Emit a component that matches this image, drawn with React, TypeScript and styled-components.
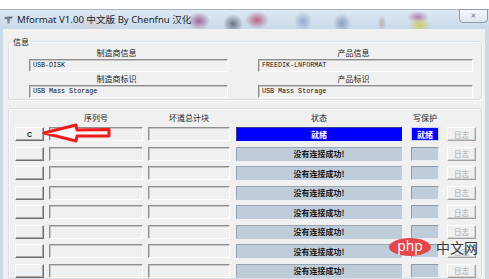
import styled, { createGlobalStyle } from "styled-components";

const GlobalStyle = createGlobalStyle`
  html, body {
    margin: 0;
    padding: 0;
    background: #fff;
  }
  body {
    font-family: "Noto Sans CJK SC", "Noto Sans", sans-serif;
  }
  * {
    box-sizing: border-box;
  }
`;

// column layout for the device table: width + gap before it
const columns = [
  { w: 29, ml: 0 },
  { w: 94, ml: 5 },
  { w: 82, ml: 5 },
  { w: 166, ml: 6 },
  { w: 28, ml: 9 },
  { w: 29, ml: 8 },
];

const headers = ["", "序列号", "坏道总计块", "状态", "写保护", ""];

const devices = [
  { drive: "C", ready: true },
  { drive: "", ready: false },
  { drive: "", ready: false },
  { drive: "", ready: false },
  { drive: "", ready: false },
  { drive: "", ready: false },
  { drive: "", ready: false },
  { drive: "", ready: false },
];

const Screen = styled.div`
  position: relative;
  width: 489px;
  height: 279px;
  overflow: hidden;
  padding-top: 9px;
  background: #fff;
`;

const Window = styled.div`
  height: 100%;
  display: flex;
  flex-direction: column;
  border-top: 1px solid #a7b3c0;
`;

const TitleBar = styled.div`
  height: 19px;
  display: flex;
  align-items: flex-start;
  background:
    radial-gradient(ellipse 11px 9px at 199px 11px, rgba(140, 50, 120, 0.7), transparent),
    radial-gradient(ellipse 10px 10px at 233px 14px, rgba(60, 60, 80, 0.65), transparent),
    radial-gradient(ellipse 12px 9px at 257px 10px, rgba(170, 50, 90, 0.7), transparent),
    radial-gradient(ellipse 9px 10px at 303px 11px, rgba(80, 100, 170, 0.45), transparent),
    radial-gradient(ellipse 9px 10px at 342px 13px, rgba(70, 100, 150, 0.5), transparent),
    radial-gradient(ellipse 4px 9px at 382px 13px, rgba(150, 110, 80, 0.4), transparent),
    radial-gradient(ellipse 11px 8px at 420px 15px, rgba(205, 195, 40, 0.7), transparent),
    radial-gradient(ellipse 11px 6px at 418px 7px, rgba(150, 60, 140, 0.6), transparent),
    radial-gradient(ellipse 24px 9px at 95px 13px, rgba(230, 180, 150, 0.3), transparent),
    linear-gradient(#dde8f3, #c9d9ea);
`;

const AppIcon = styled.svg`
  width: 9px;
  height: 9px;
  margin: 5px 4px 0 4px;
  flex: none;
`;

const Title = styled.div`
  font-family: "Noto Sans", "Noto Sans CJK SC", sans-serif;
  font-size: 9.6px;
  line-height: 19px;
  color: #1c2430;
  white-space: nowrap;
`;

const CloseButton = styled.div`
  margin-left: auto;
  margin-right: 1px;
  width: 29px;
  height: 14px;
  margin-top: -1px;
  border: 1px solid #8c9aab;
  border-radius: 0 0 4px 4px;
  background: linear-gradient(#f4f7fa, #dfe7ef);
  display: flex;
  align-items: center;
  justify-content: center;
  font-size: 7px;
  color: #6a7480;
  font-family: "DejaVu Sans", sans-serif;
`;

const Body = styled.div`
  flex: 1;
  background: #f0f0f0;
  border-left: 3px solid #cbd9e8;
  border-right: 4px solid #cbd9e8;
  padding: 8px 3px 0 5px;
`;

const GroupBox = styled.fieldset<{ $top?: number }>`
  margin: ${(p) => p.$top ?? 0}px 0 0 0;
  padding: 0;
  min-width: 0;
  border: 1px solid #d5dfe5;
  border-radius: 3px;
  box-shadow: inset 1px 1px 0 #fff, 1px 1px 0 #fff;
`;

const Legend = styled.legend`
  margin-left: 3px;
  padding: 0 1px;
  font-size: 8px;
  line-height: 9px;
  color: #1a1a1a;
`;

const InfoGrid = styled.div`
  display: grid;
  grid-template-columns: 199px 215px;
  grid-template-rows: 11px 13px 11px 13px;
  column-gap: 30px;
  row-gap: 1px;
  padding: 1px 8px 1px 20px;
`;

const InfoLabel = styled.div`
  font-size: 8px;
  line-height: 11px;
  text-align: center;
  padding-right: 24px;
  color: #1a1a1a;
`;

const InfoField = styled.div`
  border: 1px solid;
  border-color: #8f8f8f #fff #fff #8f8f8f;
  box-shadow: inset 1px 1px 0 #c6c6c6;
  background: #f0f0f0;
  font-family: "Liberation Mono", monospace;
  font-size: 6.7px;
  line-height: 11px;
  padding-left: 3px;
  color: #111;
  white-space: nowrap;
`;

const Table = styled.div`
  display: flex;
  flex-direction: column;
  gap: 5.5px;
  padding: 4px 0 0 6px;
`;

const Row = styled.div`
  position: relative;
  display: flex;
  height: 14px;
`;

const HeaderRow = styled.div`
  display: flex;
  height: 10px;
  margin-bottom: -1.5px;
`;

const Cell = styled.div<{ $w: number; $ml: number }>`
  width: ${(p) => p.$w}px;
  margin-left: ${(p) => p.$ml}px;
  flex: none;
  height: 100%;
`;

const HeaderText = styled.div`
  font-size: 8px;
  line-height: 10px;
  text-align: center;
  color: #1a1a1a;
  white-space: nowrap;
`;

const DriveButton = styled.div<{ $disabled?: boolean }>`
  height: 100%;
  border: 1px solid;
  border-color: #fff #6e6e6e #6e6e6e #fff;
  box-shadow: inset -1px -1px 0 #a9a9a9;
  background: #f0f0f0;
  display: flex;
  align-items: center;
  justify-content: center;
  font-family: "Liberation Sans", sans-serif;
  font-size: 7px;
  font-weight: 700;
  color: ${(p) => (p.$disabled ? "#a8a8a8" : "#222")};
`;

const LogButton = styled(DriveButton)`
  border-color: #fff #a0a0a0 #a0a0a0 #fff;
  box-shadow: inset -1px -1px 0 #d2d2d2;
  font-family: "Noto Sans CJK SC", sans-serif;
  font-size: 7.5px;
  font-weight: 400;
`;

const SunkenField = styled.div`
  height: 100%;
  border: 1px solid;
  border-color: #8f8f8f #fff #fff #8f8f8f;
  box-shadow: inset 1px 1px 0 #c6c6c6;
  background: #f0f0f0;
`;

const StatusField = styled.div<{ $ready: boolean; $boxed?: boolean }>`
  height: 100%;
  border: 1px solid;
  border-color: ${(p) =>
    p.$ready
      ? p.$boxed
        ? "#c8d0e8"
        : "#3a3a8a #0000ff #0000ff #3a3a8a"
      : p.$boxed
      ? "#909aa4 #e8eef4 #e8eef4 #909aa4"
      : "#98a4b0 #bfcddb #bfcddb #98a4b0"};
  background: ${(p) => (p.$ready ? "#0000ff" : "#bfcddb")};
  display: flex;
  align-items: center;
  justify-content: center;
  font-size: 8px;
  font-weight: 700;
  color: ${(p) => (p.$ready ? "#fff" : "#161616")};
  white-space: nowrap;
`;

const Arrow = styled.svg`
  position: absolute;
  left: 25px;
  top: -5px;
  width: 74px;
  height: 23px;
  pointer-events: none;
`;

const Watermark = styled.div`
  position: absolute;
  left: 389px;
  top: 238px;
  display: flex;
  align-items: center;
  gap: 5px;
`;

const PhpBadge = styled.div`
  width: 42px;
  height: 18px;
  border-radius: 50%;
  background: #e2474c;
  color: #fff;
  display: flex;
  align-items: center;
  justify-content: center;
  font-family: "Open Sans", "Liberation Sans", sans-serif;
  font-size: 14px;
  line-height: 18px;
  padding-bottom: 2px;
`;

const SiteName = styled.div`
  font-size: 14px;
  line-height: 18px;
  color: #3a3a3a;
`;

export default function App() {
  return (
    <Screen>
      <GlobalStyle />
      <Window>
        <TitleBar>
          <AppIcon viewBox="0 0 9 9">
            <path d="M0.5 2 L8.5 1 L8 3.5 L1 4 Z" fill="#5a6470" />
            <path d="M3 4 L6 4 L5.5 8.5 L3.5 8.5 Z" fill="#7d8a96" />
            <path d="M1 2.2 L8 1.4" stroke="#c8d2dc" strokeWidth="0.6" />
          </AppIcon>
          <Title>Mformat V1.00 中文版 By Chenfnu 汉化</Title>
          <CloseButton>✕</CloseButton>
        </TitleBar>
        <Body>
          <GroupBox>
            <Legend>信息</Legend>
            <InfoGrid>
              <InfoLabel>制造商信息</InfoLabel>
              <InfoLabel>产品信息</InfoLabel>
              <InfoField>USB-DISK</InfoField>
              <InfoField>FREEDIK-LNFORMAT</InfoField>
              <InfoLabel>制造商标识</InfoLabel>
              <InfoLabel>产品标识</InfoLabel>
              <InfoField>USB Mass Storage</InfoField>
              <InfoField>USB Mass Storage</InfoField>
            </InfoGrid>
          </GroupBox>
          <GroupBox $top={8}>
            <Table>
              <HeaderRow>
                {columns.map((c, i) => (
                  <Cell key={i} $w={c.w} $ml={c.ml}>
                    <HeaderText>{headers[i]}</HeaderText>
                  </Cell>
                ))}
              </HeaderRow>
              {devices.map((d, i) => (
                <Row key={i}>
                  <Cell $w={columns[0].w} $ml={columns[0].ml}>
                    <DriveButton>{d.drive}</DriveButton>
                  </Cell>
                  <Cell $w={columns[1].w} $ml={columns[1].ml}>
                    <SunkenField />
                  </Cell>
                  <Cell $w={columns[2].w} $ml={columns[2].ml}>
                    <SunkenField />
                  </Cell>
                  <Cell $w={columns[3].w} $ml={columns[3].ml}>
                    <StatusField $ready={d.ready}>
                      {d.ready ? "就绪" : "没有连接成功!"}
                    </StatusField>
                  </Cell>
                  <Cell $w={columns[4].w} $ml={columns[4].ml}>
                    <StatusField $ready={d.ready} $boxed>
                      {d.ready ? "就绪" : ""}
                    </StatusField>
                  </Cell>
                  <Cell $w={columns[5].w} $ml={columns[5].ml}>
                    <LogButton $disabled>日志</LogButton>
                  </Cell>
                  {i === 0 && (
                    <Arrow viewBox="0 0 74 23">
                      <path
                        d="M4 11 L36 3 L37 8 L69 7.5 L69 14 L37 14 L36 19 Z"
                        fill="rgba(255,255,255,0.6)"
                        stroke="#f01c1c"
                        strokeWidth="3"
                        strokeLinejoin="round"
                      />
                    </Arrow>
                  )}
                </Row>
              ))}
            </Table>
          </GroupBox>
        </Body>
      </Window>
      <Watermark>
        <PhpBadge>php</PhpBadge>
        <SiteName>中文网</SiteName>
      </Watermark>
    </Screen>
  );
}
